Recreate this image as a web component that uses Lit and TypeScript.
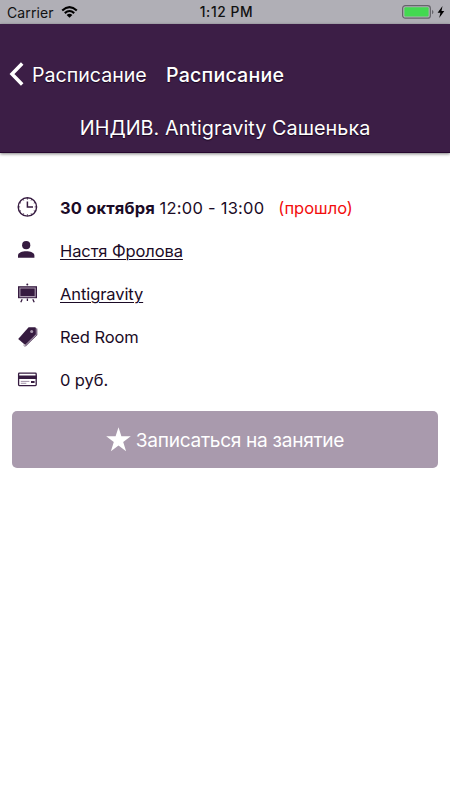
import { LitElement, html, css, svg } from "lit";
import { customElement } from "lit/decorators.js";

const clock = svg`<circle cx="11.4" cy="10.9" r="9.2" fill="none" stroke="#361b40" stroke-width="1.4"/><path d="M11.4 5.4V10.9H17" fill="none" stroke="#361b40" stroke-width="1.5"/><path d="M11.4 2v1.7M11.4 18.2v1.7M2.4 10.9h1.7M18.7 10.9h1.7M6.9 3.1l.8 1.4M15.9 3.1l-.8 1.4M6.9 18.7l.8-1.4M15.9 18.7l-.8-1.4M3.6 6.4l1.4.8M19.2 6.4l-1.4.8M3.6 15.4l1.4-.8M19.2 15.4l-1.4-.8" stroke="#361b40" stroke-width=".8"/>`;
const person = svg`<circle cx="10.2" cy="6.2" r="4.1" fill="#361b40"/><path d="M2 18.8v-2.4c0-2.6 4.2-4.1 8.2-4.1s8.2 1.5 8.2 4.1v2.4z" fill="#361b40"/>`;
const easel = svg`<circle cx="11.3" cy="2.6" r="1" fill="#361b40"/><path d="M2 4.2h19v12H2z" fill="#361b40"/><path d="M3.9 6h15.3v8.6H3.9z" fill="none" stroke="#a99aae" stroke-width="1.1"/><path d="M6.2 17.2l-1.4 3M16.8 17.2l1.4 3M11.4 16.5v2.6" stroke="#361b40" stroke-width="1.3"/>`;
const tag = svg`<path d="M12.6 1.2h6.6l.8.8.2 6.4L9.2 19 2.2 13z" fill="#361b40"/><path d="M20.4 2.2l.1 6.5L9.6 19.7" fill="none" stroke="#a99aae" stroke-width="1.3"/><path d="M20.9 2.6v6.5L9 20.4 7.4 19" fill="none" stroke="#361b40" stroke-width=".6"/><circle cx="15.7" cy="5.4" r="1.5" fill="#a99aae"/>`;
const card = svg`<rect x="2.6" y="4.2" width="17.6" height="12.4" rx=".8" fill="#fff" stroke="#361b40" stroke-width="1.3"/><path d="M2 6.5h18.8v3.5H2z" fill="#361b40"/><path d="M4.8 12.4h8.6M4.8 14.3h5.5" stroke="#8c7994" stroke-width=".8"/><path d="M15 12h3.6v2H15z" fill="#361b40"/>`;

@customElement("app-root")
export class AppRoot extends LitElement {
  static styles = css`
    :host { display: block; width: 450px; height: 800px; overflow: hidden; background: #fff; color: #1b0b26; font-family: Inter, "Liberation Sans", sans-serif; white-space: nowrap; }
    svg { display: block; flex: none; }
    .status { height: 24px; box-sizing: border-box; display: grid; grid-template-columns: 1fr auto 1fr; align-items: center; padding: 0 5px 0 7px; background: #b0afb6; color: #111; font-size: 14px; }
    .carrier { display: flex; align-items: center; gap: 7px; letter-spacing: .1px; }
    .time { font-weight: 500; font-size: 13.8px; letter-spacing: .6px; margin-left: 1px; }
    .power { display: flex; justify-content: flex-end; align-items: center; gap: 3px; }
    header { height: 129px; box-sizing: border-box; background: #3c1e46; color: #fff; border-bottom: 1px solid #26072f; box-shadow: 0 1px 3px rgba(0,0,0,.5); text-shadow: 0 1px 1px #19051f; font-size: 19.6px; }
    .nav { display: flex; align-items: center; height: 52px; padding: 25px 0 0 9px; }
    .back { display: flex; align-items: center; gap: 7px; width: 157px; }
    .back svg { margin-top: -2px; }
    .title { font-weight: 500; letter-spacing: .2px; }
    .heading { margin: 0; text-align: center; font-size: 19.8px; font-weight: 400; line-height: 54px; letter-spacing: .05px; }
    .rows { padding: 33px 16px 0; }
    .row { display: flex; align-items: center; height: 43.2px; font-size: 16.5px; letter-spacing: -.09px; }
    .icon { width: 44px; }
    b { font-weight: 700; letter-spacing: .16px; }
    .hours { letter-spacing: .24px; }
    .past { color: #f20d0d; margin-left: 14px; letter-spacing: 0; }
    .link { text-decoration: underline; text-underline-offset: 2px; text-decoration-thickness: 1px; }
    .book { margin: 9px 12px 0; width: 426px; height: 57px; display: flex; align-items: center; justify-content: center; gap: 5px; padding: 0; border: 0; border-radius: 5px; background: #a99aad; color: #fff; font: 400 19.1px Inter, "Liberation Sans", sans-serif; letter-spacing: -.3px; }
    .book span { padding-top: 2px; }
  `;

  private row(icon: unknown, content: unknown) {
    return html`<div class="row"><div class="icon"><svg width="23" height="23" viewBox="0 0 23 23">${icon}</svg></div><div>${content}</div></div>`;
  }

  render() {
    return html`
      <div class="status">
        <div class="carrier"><span>Carrier</span>
          <svg width="17" height="12" viewBox="0 0 17 12"><path d="M1.2 4.5Q8.5-2.2 15.8 4.5M3.8 7.1Q8.5 2.9 13.2 7.1" fill="none" stroke="#000" stroke-width="2.1"/><path d="M5.6 8.9Q8.5 6.5 11.4 8.9L8.5 11.8z"/></svg>
        </div>
        <div class="time">1:12 PM</div>
        <div class="power">
          <svg width="32" height="14" viewBox="0 0 32 14"><rect x=".6" y=".6" width="27.8" height="12.6" rx="2.8" fill="none" stroke="#66656b" stroke-width="1.2"/><rect x="2.4" y="2.3" width="24.2" height="9.2" rx="1" fill="#43d951"/><path d="M30 4.7q3 2.3 0 4.6z" fill="#66656b"/></svg>
          <svg width="8" height="12" viewBox="0 0 8 12"><path d="M5.5 0L.6 6.7h2.8L2.2 12 7.3 5H4.5z"/></svg>
        </div>
      </div>
      <header>
        <div class="nav">
          <div class="back"><svg width="16" height="24" viewBox="0 0 16 24"><path d="M13.2 1.6L3 12l10.2 10.4" fill="none" stroke="#fff" stroke-width="3.5"/></svg><span>Расписание</span></div>
          <div class="title">Расписание</div>
        </div>
        <h1 class="heading">ИНДИВ. Antigravity Сашенька</h1>
      </header>
      <main>
        <div class="rows">
          ${this.row(clock, html`<b>30 октября</b> <span class="hours">12:00 - 13:00</span><span class="past">(прошло)</span>`)}
          ${this.row(person, html`<span class="link">Настя Фролова</span>`)}
          ${this.row(easel, html`<span class="link">Antigravity</span>`)}
          ${this.row(tag, "Red Room")}
          ${this.row(card, "0 руб.")}
        </div>
        <button class="book"><svg width="25" height="25" viewBox="0 0 25 25"><path d="M12.5.2l2.9 9.1h9.4l-7.6 5.6 2.9 9.4-7.6-5.8-7.6 5.8 2.9-9.4L.2 9.3h9.4z" fill="#fff"/></svg><span>Записаться на занятие</span></button>
      </main>`;
  }
}
